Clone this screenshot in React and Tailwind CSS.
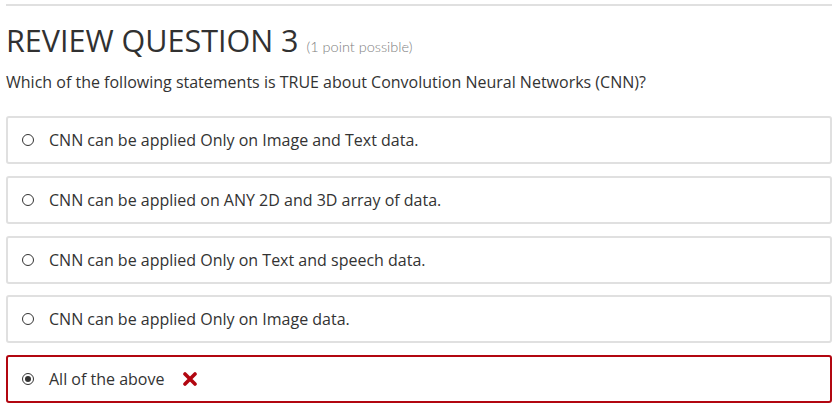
import React from 'react';

const options = [
  'CNN can be applied Only on Image and Text data.',
  'CNN can be applied on ANY 2D and 3D array of data.',
  'CNN can be applied Only on Text and speech data.',
  'CNN can be applied Only on Image data.',
  'All of the above',
];

function Radio({ checked }) {
  return (
    <span className="w-[12px] h-[12px] rounded-full border border-[#333] flex items-center justify-center shrink-0">
      {checked && <span className="w-[6px] h-[6px] rounded-full bg-[#333]" />}
    </span>
  );
}

export default function App() {
  const selected = 4;
  return (
    <div className="w-[839px] h-[413px] bg-white font-['Open_Sans',sans-serif] text-[#333] px-[6px] pt-[4px]">
      <div className="border-t-2 border-[#e0e0e0] mr-[1px]" />
      <h2 className="flex items-baseline mt-[14px] leading-[40px]">
        <span className="text-[30.5px] text-[#313131]">REVIEW QUESTION 3</span>
        <span className="ml-[8px] text-[14.5px] text-[#808080] font-['Lato',sans-serif] font-light">(1 point possible)</span>
      </h2>
      <p className="text-[16px] mt-[3px] leading-[24px]">
        Which of the following statements is TRUE about Convolution Neural Networks (CNN)?
      </p>
      <div className="flex flex-col gap-[11.75px] mt-[22px] mr-[1px]">
        {options.map((opt, i) => (
          <label
            key={i}
            className={
              'h-[48px] flex items-center pl-[14px] rounded-[3px] border-2 ' +
              (i === selected ? 'border-[#b20610]' : 'border-[#e0e0e0]')
            }
          >
            <Radio checked={i === selected} />
            <span className="ml-[15px] text-[16px]">{opt}</span>
            {i === selected && (
              <svg className="ml-[19px]" width="14" height="14" viewBox="0 0 14 14">
                <path d="M2 2 L12 12 M12 2 L2 12" stroke="#b20610" strokeWidth="3.6" strokeLinecap="round" />
              </svg>
            )}
          </label>
        ))}
      </div>
    </div>
  );
}
